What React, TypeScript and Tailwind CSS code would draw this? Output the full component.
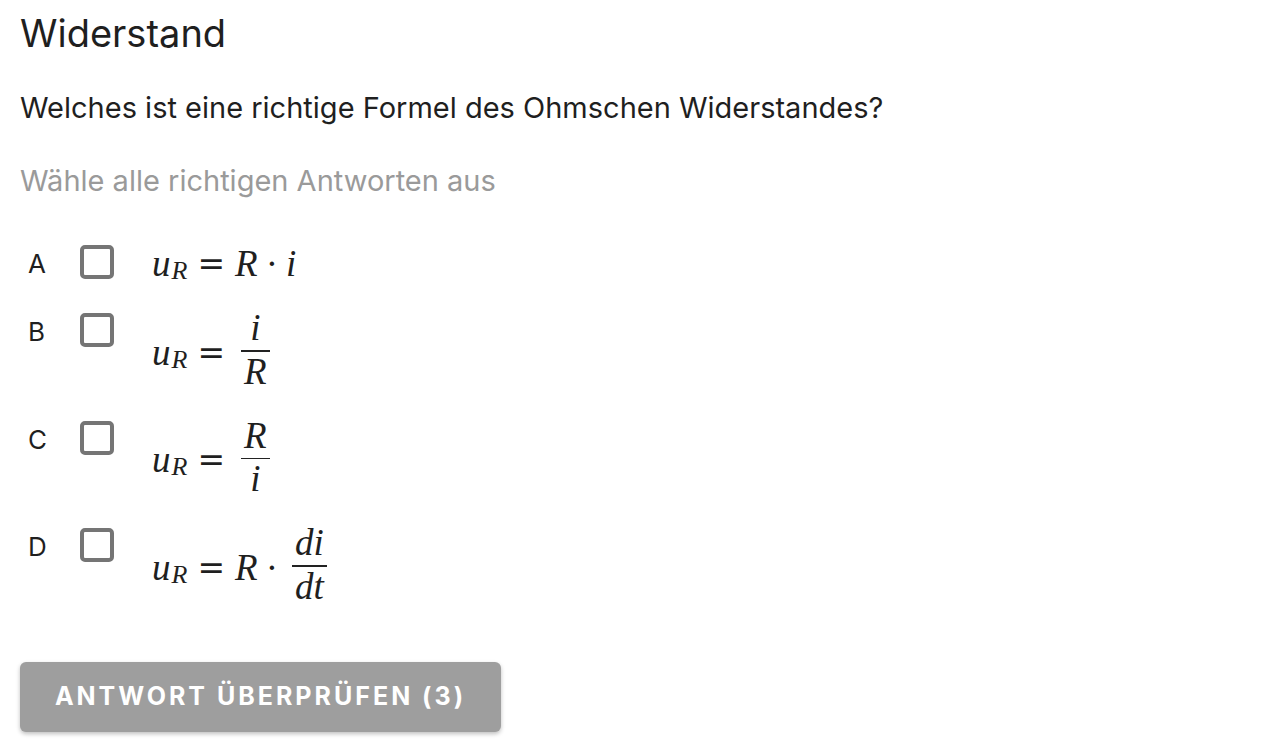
const math = { fontFamily: '"Liberation Serif", "Times New Roman", serif' };

function U() {
  return (
    <span className="italic">
      u<sub className="relative top-[3px] ml-[1px] text-[26px] italic">R</sub>
    </span>
  );
}

function Frac({ num, den }: { num: React.ReactNode; den: React.ReactNode }) {
  return (
    <span className="relative -top-[4px] inline-flex flex-col items-center mx-[6px]">
      <span className="px-[3px] pb-[3px] leading-[38px]">{num}</span>
      <span className="h-[1.5px] w-full bg-[#222]" />
      <span className="px-[3px] pt-[2px] leading-[35px]">{den}</span>
    </span>
  );
}

function Eq() {
  return (
    <span className="mx-[10px] text-[33px]" style={{ fontFamily: '"DejaVu Serif", serif' }}>
      =
    </span>
  );
}

function Dot() {
  return <span className="mx-[8px]">·</span>;
}

const options = [
  {
    key: 'A',
    expr: (
      <>
        <U />
        <Eq />
        <span className="italic">R</span>
        <Dot />
        <span className="italic">i</span>
      </>
    ),
  },
  {
    key: 'B',
    expr: (
      <>
        <U />
        <Eq />
        <Frac num={<span className="italic">i</span>} den={<span className="italic">R</span>} />
      </>
    ),
  },
  {
    key: 'C',
    expr: (
      <>
        <U />
        <Eq />
        <Frac num={<span className="italic">R</span>} den={<span className="italic">i</span>} />
      </>
    ),
  },
  {
    key: 'D',
    expr: (
      <>
        <U />
        <Eq />
        <span className="italic">R</span>
        <Dot />
        <Frac num={<span className="italic">di</span>} den={<span className="italic">dt</span>} />
      </>
    ),
  },
];

export default function App() {
  return (
    <div
      className="min-h-screen bg-white px-[20px] pt-[9px] text-[#1f1f1f]"
      style={{ fontFamily: 'Inter, "Noto Sans", sans-serif' }}
    >
      <h1 className="text-[38px] leading-[48px] font-normal">Widerstand</h1>
      <p className="mt-[33px] text-[29px] leading-[36px]">
        Welches ist eine richtige Formel des Ohmschen Widerstandes?
      </p>
      <p className="mt-[37px] text-[29px] leading-[36px] text-[#9a9a9a]">
        Wähle alle richtigen Antworten aus
      </p>

      <div className="mt-[46px] flex flex-col gap-[28px]">
        {options.map((o) => (
          <div key={o.key} className="flex min-h-[40px] items-start">
            <div className="w-[60px] pl-[8px] pt-[2px] text-[26px] leading-[34px]">{o.key}</div>
            <label className="h-[34px] w-[34px] shrink-0 rounded-[5px] border-[4px] border-[#757575] bg-white" />
            <div className="ml-[38px] flex items-center text-[37px] leading-[38px]" style={math}>
              {o.expr}
            </div>
          </div>
        ))}
      </div>

      <button className="mt-[54px] h-[70px] w-[481px] rounded-[6px] bg-[#9e9e9e] text-[25px] font-bold tracking-[3px] text-white shadow-[0_2px_4px_rgba(0,0,0,0.25)]">
        ANTWORT ÜBERPRÜFEN (3)
      </button>
    </div>
  );
}
